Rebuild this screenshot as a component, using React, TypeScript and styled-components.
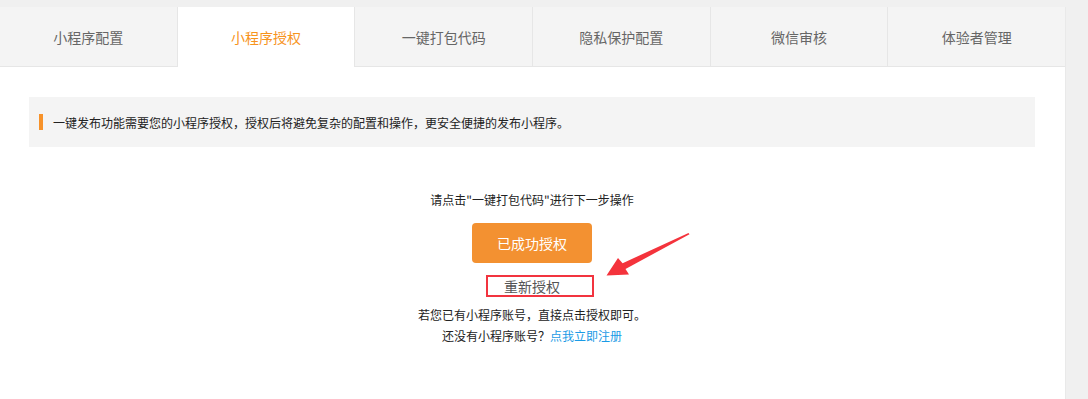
import React, { useState } from 'react';
import styled, { createGlobalStyle } from 'styled-components';

const GlobalStyle = createGlobalStyle`
  html, body {
    margin: 0;
    padding: 0;
    background: #f0f0f0;
    overflow: hidden;
  }
  body {
    font-family: "Noto Sans CJK SC", "Noto Sans", "Liberation Sans", sans-serif;
  }
`;

const tabs = ['小程序配置', '小程序授权', '一键打包代码', '隐私保护配置', '微信审核', '体验者管理'];

const PageStyled = styled.div`
  padding-top: 7px;
  width: 1066px;
`;

const PanelStyled = styled.div`
  background: #fff;
  height: 392px;
  border-right: 1px solid #e9e9e9;
  position: relative;
`;

const TabBarStyled = styled.div`
  display: flex;
  height: 60px;
  border-bottom: 1px solid #e6e6e6;
  box-sizing: border-box;
`;

const TabStyled = styled.div<{ active?: boolean }>`
  flex: 1;
  display: flex;
  align-items: center;
  justify-content: center;
  font-size: 14px;
  color: ${({ active }) => (active ? '#f7941d' : '#666')};
  background: ${({ active }) => (active ? '#fff' : '#f4f4f4')};
  border-right: 1px solid #e6e6e6;
  margin-bottom: ${({ active }) => (active ? '-1px' : '0')};
  cursor: pointer;
  &:last-child {
    border-right: none;
  }
`;

const BodyStyled = styled.div`
  padding: 30px 30px 0 29px;
`;

const NoticeStyled = styled.div`
  background: #f4f4f4;
  height: 50px;
  display: flex;
  align-items: center;
  padding-left: 10px;
  gap: 10px;
  font-size: 12px;
  color: #222;

  &::before {
    content: '';
    width: 4px;
    height: 16px;
    background: #f7922a;
  }
`;

const CenterStyled = styled.div`
  display: flex;
  flex-direction: column;
  align-items: center;
  margin-top: 42px;
  font-size: 12px;
  color: #222;
`;

const LineStyled = styled.div<{ gap?: number }>`
  line-height: 21px;
  margin-top: ${({ gap }) => gap ?? 0}px;
`;

const AuthButton = styled.button`
  margin-top: 13px;
  width: 120px;
  height: 40px;
  border: none;
  border-radius: 4px;
  background: #f39131;
  color: #fff;
  font-family: inherit;
  font-size: 14px;
  cursor: pointer;
`;

const ReauthWrap = styled.div`
  position: relative;
  margin-top: 12px;
  font-size: 14px;
  line-height: 22px;
  color: #555;
  cursor: pointer;
`;

const Highlight = styled.span`
  position: absolute;
  left: -18px;
  top: 0;
  width: 104px;
  height: 18px;
  border: 2px solid #f2343f;
`;

const LinkStyled = styled.a`
  color: #1a9be6;
  text-decoration: none;
`;

const ArrowStyled = styled.svg`
  position: absolute;
  left: 600px;
  top: 213px;
`;

const Arrow = () => (
  <ArrowStyled width="95" height="60" viewBox="0 0 95 60">
    <polygon
      points="6.5,55.5 18,38 22.6,43.2 88.5,13 89.5,14.2 25.5,49 29,54.5"
      fill="#f4333c"
    />
  </ArrowStyled>
);

const App = () => {
  const [active, setActive] = useState(1);

  return (
    <PageStyled>
      <GlobalStyle />
      <PanelStyled>
        <TabBarStyled>
          {tabs.map((t, i) => (
            <TabStyled key={t} active={i === active} onClick={() => setActive(i)}>
              {t}
            </TabStyled>
          ))}
        </TabBarStyled>
        <BodyStyled>
          <NoticeStyled>
            一键发布功能需要您的小程序授权，授权后将避免复杂的配置和操作，更安全便捷的发布小程序。
          </NoticeStyled>
          <CenterStyled>
            <LineStyled>请点击"一键打包代码"进行下一步操作</LineStyled>
            <AuthButton type="button">已成功授权</AuthButton>
            <ReauthWrap>
              重新授权
              <Highlight />
            </ReauthWrap>
            <LineStyled gap={7}>若您已有小程序账号，直接点击授权即可。</LineStyled>
            <LineStyled>
              还没有小程序账号？<LinkStyled href="#">点我立即注册</LinkStyled>
            </LineStyled>
          </CenterStyled>
        </BodyStyled>
        <Arrow />
      </PanelStyled>
    </PageStyled>
  );
};

export default App;
